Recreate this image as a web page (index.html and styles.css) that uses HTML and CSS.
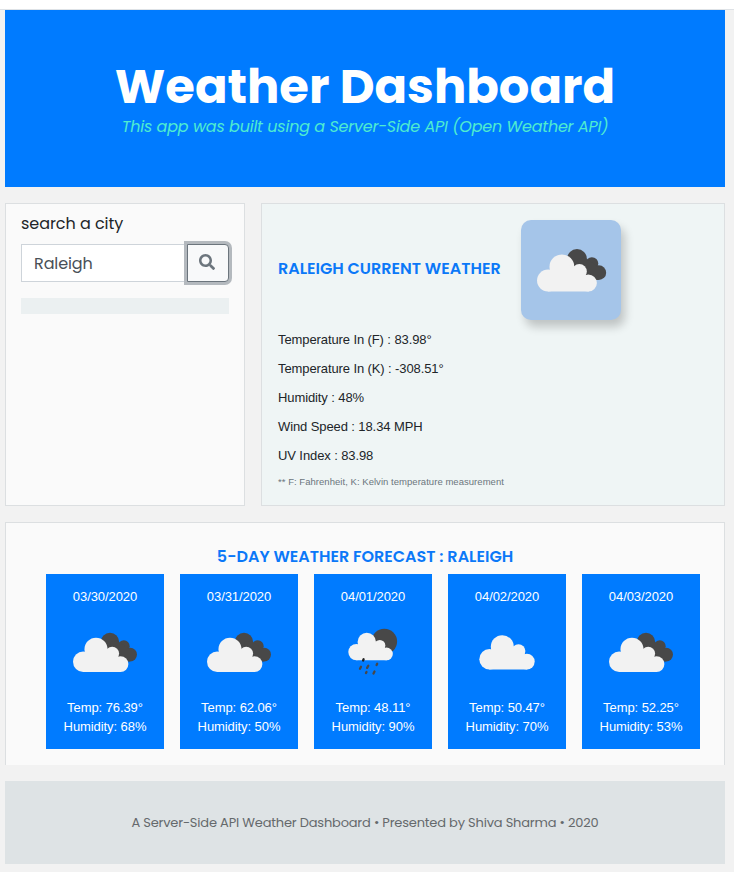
FILE: index.html
```
<!DOCTYPE html>
<html lang="en">
<head>
<meta charset="utf-8">
<title>Weather Dashboard</title>
<link rel="stylesheet" href="styles.css">
</head>
<body>
<svg class="defs" aria-hidden="true">
  <symbol id="cloud" viewBox="0 0 56 35" overflow="visible">
    <g fill="#f2f2f2"><circle cx="23" cy="11.5" r="11.5"/><circle cx="39.2" cy="15.9" r="6.9"/><circle cx="47.5" cy="26.4" r="7.9"/><circle cx="10.2" cy="24.1" r="10.2"/><path d="M10 18 13 14 23 8 39 14 45 19 48 22V34.3H10z"/></g>
  </symbol>
  <symbol id="clouds" viewBox="0 0 64 40" overflow="visible">
    <g fill="#484848"><circle cx="37" cy="9.2" r="9.2"/><circle cx="50.8" cy="13.5" r="5.9"/><circle cx="57.2" cy="21.9" r="6.8"/><path d="M37 9 44 8 57 17V28.7H42z"/></g>
    <use href="#cloud" y="5" width="56" height="35"/>
  </symbol>
</svg>
<div class="topbar"></div>
<div class="page">
  <header class="hero">
    <h1 class="hero-title">Weather Dashboard</h1>
    <p class="hero-sub">This app was built using a Server-Side API (Open Weather API)</p>
  </header>
  <main class="main">
    <section class="search">
      <label class="search-label" for="city">search a city</label>
      <div class="search-row">
        <input class="search-input" id="city" type="text" value="Raleigh">
        <button class="search-btn" aria-label="Search"><svg width="16" height="16" viewBox="0 0 512 512"><path fill="#6c757d" d="M505 442.700L405.300 343c-4.500-4.500-10.600-7-17-7H372c27.600-35.300 44-79.700 44-128C416 93.100 322.900 0 208 0S0 93.100 0 208s93.100 208 208 208c48.300 0 92.700-16.400 128-44v16.300c0 6.400 2.500 12.500 7 17l99.700 99.700c9.400 9.400 24.600 9.400 33.900 0l28.300-28.300c9.400-9.400 9.400-24.600.1-34zM208 336c-70.700 0-128-57.200-128-128 0-70.700 57.200-128 128-128 70.700 0 128 57.200 128 128 0 70.700-57.200 128-128 128z"/></svg></button>
      </div>
      <div class="history"></div>
    </section>
    <section class="current">
      <div class="current-head">
        <h2 class="heading current-title">RALEIGH CURRENT WEATHER</h2>
        <div class="tile"><svg width="100" height="100" viewBox="0 0 100 100"><use href="#clouds" x="16" y="29" width="69.200" height="43.200"/></svg></div>
      </div>
      <p class="fact">Temperature In (F) : 83.98°</p>
      <p class="fact">Temperature In (K) : -308.51°</p>
      <p class="fact">Humidity : 48%</p>
      <p class="fact">Wind Speed : 18.34 MPH</p>
      <p class="fact">UV Index : 83.98</p>
      <p class="note">** F: Fahrenheit, K: Kelvin temperature measurement</p>
    </section>
  </main>
  <section class="forecast">
    <h2 class="heading forecast-title">5-DAY WEATHER FORECAST : RALEIGH</h2>
    <div class="days">
      <article class="day"><p>03/30/2020</p><svg class="day-icon" viewBox="0 0 118 91"><use href="#clouds" x="27" y="26.700" width="64" height="40"/></svg><p>Temp: 76.39°</p><p>Humidity: 68%</p></article>
      <article class="day"><p>03/31/2020</p><svg class="day-icon" viewBox="0 0 118 91"><use href="#clouds" x="27" y="26.700" width="64" height="40"/></svg><p>Temp: 62.06°</p><p>Humidity: 50%</p></article>
      <article class="day"><p>04/01/2020</p><svg class="day-icon" viewBox="0 0 118 91"><circle cx="70.300" cy="35.500" r="12.800" fill="#484848"/><use href="#cloud" x="34.300" y="26.700" width="45" height="28.200"/><g stroke="#484848" stroke-width="2.300" stroke-linecap="round"><path d="M49.600 53.300l-.5 1.200" stroke="#222"/><path d="M47 60.700l-1 2M54.300 59.700l-1.200 2.200M63.200 57.800l-.6 1.200M52.500 66l-.5 1M60.500 65.500l-1 2"/></g></svg><p>Temp: 48.11°</p><p>Humidity: 90%</p></article>
      <article class="day"><p>04/02/2020</p><svg class="day-icon" viewBox="0 0 118 91"><use href="#cloud" x="31.300" y="29.200" width="56" height="35"/></svg><p>Temp: 50.47°</p><p>Humidity: 70%</p></article>
      <article class="day"><p>04/03/2020</p><svg class="day-icon" viewBox="0 0 118 91"><use href="#clouds" x="27" y="26.700" width="64" height="40"/></svg><p>Temp: 52.25°</p><p>Humidity: 53%</p></article>
    </div>
  </section>
  <footer class="footer">A Server-Side API Weather Dashboard • Presented by Shiva Sharma • 2020</footer>
</div>
</body>
</html>
```
FILE: styles.css
```
* { box-sizing: border-box; }
body { margin: 0; background: #f2f2f2; color: #212529; font-family: Poppins, Inter, sans-serif; font-size: 16px; line-height: 24px; }
h1, h2, p { margin: 0; white-space: nowrap; }
.defs { display: none; }
.topbar { height: 10px; background: #fff; border-bottom: 1px solid #dee2e6; }
.page { width: 720px; margin-left: 5px; display: flex; flex-direction: column; gap: 16px; }
.hero { height: 177px; background: #007bff; text-align: center; padding-top: 48px; }
.hero-title { color: #fff; font-size: 48px; font-weight: 700; line-height: 57px; }
.hero-sub { color: #4fecd0; font-style: italic; font-size: 16px; line-height: 24px; letter-spacing: -0.22px; }
.main { display: grid; grid-template-columns: 240px 464px; gap: 16px; height: 303px; }
.search { background: #fafafa; border: 1px solid #dcdfe1; padding: 8px 15px; }
.search-label { display: block; margin-bottom: 8px; letter-spacing: -0.05px; }
.search-row { display: flex; height: 38px; }
.search-input { flex: 1; min-width: 0; border: 1px solid #ced4da; background: #fff; color: #495057; font: inherit; padding: 2px 12px 0; letter-spacing: -0.1px; outline: 0; }
.search-btn { width: 42px; margin-left: -1px; border: 1px solid #6c757d; border-radius: 0 4px 4px 0; background: #f8f9fa; box-shadow: 0 0 0 3px #b4b9be; display: flex; align-items: center; justify-content: center; padding: 0 2px 2px 0; }
.history { height: 16px; margin-top: 16px; background: #ebf0f1; }
.current { background: #eff5f5; border: 1px solid #dcdfe1; padding: 16px; }
.current-head { display: flex; align-items: center; height: 100px; margin-bottom: 10px; }
.heading { color: #0b78f8; font-size: 16px; font-weight: 600; line-height: 20px; }
.current-title { width: 243px; margin-top: -3px; }
.tile { width: 100px; height: 100px; border-radius: 10px; background: #a5c5e9; box-shadow: 4px 7px 10px rgba(0, 0, 0, .2); }
.tile svg { display: block; }
.fact { font: 13px/19px "Liberation Sans", Arial, sans-serif; letter-spacing: -0.1px; margin-bottom: 10px; }
.note { font: 9.500px/14px "Liberation Sans", Arial, sans-serif; color: #6c757d; letter-spacing: 0.04px; }
.forecast { height: 243px; background: #fafafa; border: 1px solid #dcdfe1; border-bottom: 0; padding: 24px 24px 0 40px; }
.forecast-title { text-align: center; margin: 0 0 7px -16px; }
.days { display: grid; grid-template-columns: repeat(5, 118px); gap: 16px; }
.day { height: 175px; background: #007bff; color: #fff; text-align: center; padding-top: 12.500px; font: 13px/19.500px "Liberation Sans", Arial, sans-serif; letter-spacing: -0.08px; }
.day-icon { display: block; width: 118px; height: 91px; margin-bottom: 0.500px; }
.footer { height: 83px; background: #dee3e5; color: #65696c; text-align: center; font-size: 13px; line-height: 83px; letter-spacing: -0.19px; white-space: nowrap; }
```
